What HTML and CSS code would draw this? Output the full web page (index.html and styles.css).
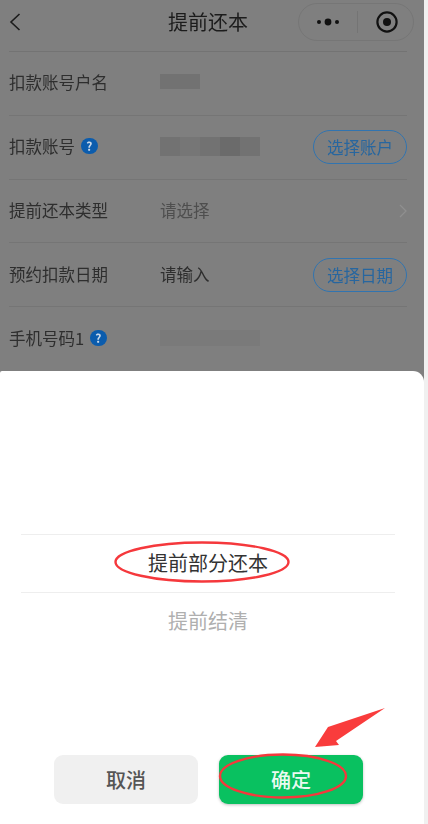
FILE: index.html
```html
<!DOCTYPE html>
<html lang="zh-CN">
<head>
<meta charset="utf-8">
<title>提前还本</title>
<link rel="stylesheet" href="styles.css">
</head>
<body>
<div class="page">
  <section class="dimmed">
    <header class="nav">
      <svg class="back" width="12" height="20" viewBox="0 0 12 20"><path d="M10.5 2 L2 10 L10.5 18" fill="none" stroke="#1c1c1c" stroke-width="1.6"/></svg>
      <h1 class="title">提前还本</h1>
      <div class="capsule">
        <svg class="more" width="24" height="8" viewBox="0 0 24 8"><circle cx="3" cy="4" r="2" fill="#111"/><circle cx="12" cy="4" r="3.4" fill="#111"/><circle cx="21" cy="4" r="2" fill="#111"/></svg>
        <span class="capsule-line"></span>
        <svg class="target" width="24" height="24" viewBox="0 0 24 24"><circle cx="12" cy="12" r="9.6" fill="none" stroke="#111" stroke-width="2.2"/><circle cx="12" cy="12" r="4" fill="#111"/></svg>
      </div>
    </header>
    <div class="row">
      <span class="label">扣款账号户名</span>
      <span class="value"><span class="mask mask-name"></span></span>
    </div>
    <div class="row">
      <span class="label">扣款账号<i class="help">?</i></span>
      <span class="value"><span class="mask mask-account"><b></b><b></b><b></b><b></b><b></b></span></span>
      <button class="pick">选择账户</button>
    </div>
    <div class="row">
      <span class="label">提前还本类型</span>
      <span class="value muted">请选择</span>
      <svg class="chevron" width="10" height="16" viewBox="0 0 10 16"><path d="M2 2 L8 8 L2 14" fill="none" stroke="#8f8f8f" stroke-width="1.3"/></svg>
    </div>
    <div class="row">
      <span class="label">预约扣款日期</span>
      <span class="value">请输入</span>
      <button class="pick">选择日期</button>
    </div>
    <div class="row">
      <span class="label">手机号码1<i class="help">?</i></span>
      <span class="value"><span class="mask mask-phone"></span></span>
    </div>
  </section>
  <section class="sheet">
    <div class="picker">
      <div class="option selected">提前部分还本</div>
      <div class="option faded">提前结清</div>
    </div>
    <div class="actions">
      <button class="btn cancel">取消</button>
      <button class="btn confirm">确定</button>
    </div>
  </section>
  <svg class="marks" width="424" height="824" viewBox="0 0 424 824">
    <ellipse cx="202" cy="562" rx="86.5" ry="19.5" fill="none" stroke="#f5383c" stroke-width="2.4"/>
    <ellipse cx="283" cy="776" rx="63" ry="21.5" fill="none" stroke="#f5383c" stroke-width="2.4"/>
    <polygon points="385,708 328,727 315,747 339,745 336,741" fill="#f93c3c"/>
  </svg>
</div>
</body>
</html>
```
FILE: styles.css
```css
* { box-sizing: border-box; }
html, body { margin: 0; padding: 0; }
body {
  width: 428px;
  height: 824px;
  overflow: hidden;
  background: #f0f0f0;
  font-family: "Noto Sans CJK SC", "Noto Sans", sans-serif;
}
.page {
  position: relative;
  width: 424px;
  height: 824px;
  display: flex;
  flex-direction: column;
  background: #7f7f7f;
}
.dimmed {
  height: 371px;
  padding: 0 17px 0 9px;
  color: #2e2e2e;
  overflow: hidden;
  filter: blur(0.3px);
}
.nav {
  height: 52px;
  display: flex;
  align-items: center;
  justify-content: center;
  position: relative;
  border-bottom: 1px solid #737373;
}
.back { position: absolute; left: 0; top: 12px; }
.title {
  margin: 0 0 8px;
  font-size: 20px;
  font-weight: 400;
  line-height: 28px;
  color: #1c1c1c;
}
.capsule {
  position: absolute;
  right: -7px;
  top: 3px;
  width: 116px;
  height: 38px;
  border: 1px solid #767676;
  border-radius: 19px;
  display: flex;
  align-items: center;
  padding-left: 17px;
}
.capsule-line { width: 1px; height: 22px; background: #747474; margin: 0 17px 0 17px; }
.row {
  height: 63.8px;
  display: flex;
  align-items: center;
  border-bottom: 1px solid #757575;
}
.row:last-child { border-bottom: 0; }
.label {
  width: 151px;
  flex: none;
  margin-top: -2px;
  font-size: 16.5px;
  line-height: 24px;
  display: flex;
  align-items: center;
}
.help {
  width: 16.5px;
  height: 16.5px;
  margin-left: 6px;
  border-radius: 50%;
  background: #0b5cad;
  color: #c9d9ea;
  font-size: 12px;
  font-style: normal;
  font-weight: 700;
  line-height: 16.5px;
  text-align: center;
}
.value { flex: 1; margin-top: -2px; font-size: 16.5px; line-height: 24px; display: flex; align-items: center; }
.muted { color: #4e4e4e; }
.mask { display: block; filter: blur(0.5px); }
.mask-name { width: 40px; height: 15px; background: #727272; margin-top: -2px; }
.mask-account { width: 100px; height: 19px; display: flex; }
.mask-account b { flex: 1; background: #727272; }
.mask-account b:nth-child(2) { background: #767676; }
.mask-account b:nth-child(4) { background: #6b6b6b; }
.mask-phone { width: 100px; height: 16px; background: #7a7a7a; }
.pick {
  width: 94px;
  height: 34px;
  flex: none;
  padding: 0;
  border: 1.2px solid #3174b0;
  border-radius: 17px;
  background: transparent;
  color: #27669f;
  font-family: inherit;
  font-size: 16.5px;
  line-height: 28px;
}
.chevron { margin-right: -1px; margin-left: auto; flex: none; }
.sheet {
  flex: 1;
  background: #fff;
  border-radius: 2px 11px 0 0;
  display: flex;
  flex-direction: column;
  justify-content: space-between;
  padding: 163px 0 20px;
}
.picker { margin: 0 29px 0 21px; }
.option {
  height: 58px;
  border-top: 1px solid #eeeeee;
  font-size: 20px;
  line-height: 56px;
  text-align: center;
  color: #333;
}
.faded { color: #afafaf; }
.actions {
  display: flex;
  justify-content: flex-start;
  gap: 21px;
  padding-left: 54px;
}
.btn {
  width: 144px;
  height: 49px;
  padding: 0;
  border: 0;
  border-radius: 9px;
  font-family: inherit;
  font-size: 20px;
  font-weight: 500;
}
.cancel { background: #f0f0f0; color: #555; }
.confirm { background: #09c160; color: #eafaf1; box-shadow: 0 1px 3px rgba(0,0,0,.25); }
.marks { position: absolute; left: 0; top: 0; pointer-events: none; }
```
